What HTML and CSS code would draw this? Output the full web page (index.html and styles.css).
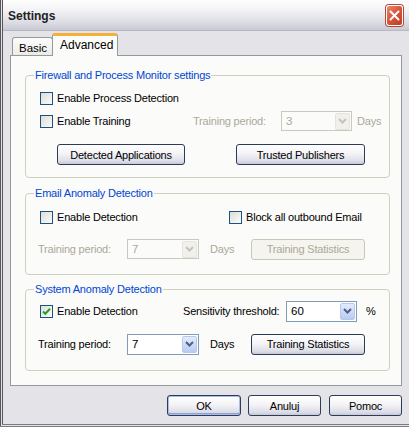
FILE: index.html
```html
<!DOCTYPE html>
<html lang="en">
<head>
  <meta charset="UTF-8">
  <title>Settings</title>
  <link rel="stylesheet" href="styles.css">
</head>
<body>
  <div class="window">
    <div class="titlebar">
      <span class="title">Settings</span>
      <button class="close" aria-label="Close">
        <svg width="11" height="11" viewBox="0 0 11 11"><path d="M1.5 1.5l8 8M9.5 1.5l-8 8" stroke="#fff" stroke-width="2" stroke-linecap="round"/></svg>
      </button>
    </div>

    <div class="main">
      <div class="tabs">
        <div class="tab">Basic</div>
        <div class="tab active">Advanced</div>
      </div>

      <div class="panel">
        <!-- Firewall -->
        <div class="group g1">
          <div class="group-title">Firewall and Process Monitor settings</div>
          <div class="row r-tall">
            <label class="check"><span class="box"></span>Enable Process Detection</label>
          </div>
          <div class="row">
            <label class="check slot-153"><span class="box"></span>Enable Training</label>
            <span class="lbl disabled w-88">Training period:</span>
            <div class="combo disabled w-71"><span>3</span><span class="drop"><svg width="9" height="6" viewBox="0 0 9 6"><path d="M1 1l3.5 3.5L8 1" fill="none" stroke="#c4c3bc" stroke-width="2"/></svg></span></div>
            <span class="lbl disabled unit">Days</span>
          </div>
          <div class="row btn-row">
            <button class="btn w-128">Detected Applications</button>
            <button class="btn w-129">Trusted Publishers</button>
          </div>
        </div>

        <!-- Email -->
        <div class="group g2">
          <div class="group-title">Email Anomaly Detection</div>
          <div class="row">
            <label class="check slot-189"><span class="box"></span>Enable Detection</label>
            <label class="check"><span class="box"></span>Block all outbound Email</label>
          </div>
          <div class="row second">
            <span class="lbl disabled period">Training period:</span>
            <div class="combo disabled w-72"><span>7</span><span class="drop"><svg width="9" height="6" viewBox="0 0 9 6"><path d="M1 1l3.5 3.5L8 1" fill="none" stroke="#c4c3bc" stroke-width="2"/></svg></span></div>
            <span class="lbl disabled days">Days</span>
            <button class="btn disabled w-114" disabled>Training Statistics</button>
          </div>
        </div>

        <!-- System -->
        <div class="group g3">
          <div class="group-title">System Anomaly Detection</div>
          <div class="row">
            <label class="check slot-143"><span class="box checked"><svg width="9" height="9" viewBox="0 0 9 9"><path d="M1 4.5l2.3 2.3L8 1.8" fill="none" stroke="#21a121" stroke-width="2"/></svg></span>Enable Detection</label>
            <span class="lbl w-103">Sensitivity threshold:</span>
            <div class="combo w-71"><span>60</span><span class="drop"><svg width="9" height="6" viewBox="0 0 9 6"><path d="M1 1l3.5 3.5L8 1" fill="none" stroke="#4d6185" stroke-width="2"/></svg></span></div>
            <span class="lbl pct">%</span>
          </div>
          <div class="row third">
            <span class="lbl period">Training period:</span>
            <div class="combo w-72"><span>7</span><span class="drop"><svg width="9" height="6" viewBox="0 0 9 6"><path d="M1 1l3.5 3.5L8 1" fill="none" stroke="#4d6185" stroke-width="2"/></svg></span></div>
            <span class="lbl days">Days</span>
            <button class="btn w-114">Training Statistics</button>
          </div>
        </div>
      </div>

      <div class="actions">
        <button class="btn ok">OK</button>
        <button class="btn w-73">Anuluj</button>
        <button class="btn w-73">Pomoc</button>
      </div>
    </div>
  </div>
</body>
</html>
```

FILE: styles.css
```css
* {
  box-sizing: border-box;
}

body {
  margin: 0;
  background: #fff;
  font-family: 'Liberation Sans', Arial, sans-serif;
  font-size: 11px;
  letter-spacing: -0.2px;
  color: #000;
}

.window {
  width: 409px;
  height: 427px;
  background: #e4e3e8;
  border-left: 3px double #55555a;
  border-bottom: 3px double #7a7a80;
  display: flex;
  flex-direction: column;
}

.titlebar {
  height: 31px;
  display: flex;
  align-items: center;
  justify-content: space-between;
  padding: 0 6px 0 5px;
  background: linear-gradient(#fefefe 0%, #f2f2f5 35%, #dcdce4 75%, #c9c9d5 100%);
  border-bottom: 1px solid #b9b9c6;
}

.title {
  font-weight: bold;
  font-size: 12px;
  letter-spacing: 0;
  color: #222;
  margin-top: 1px;
}

.close {
  width: 17px;
  height: 21px;
  padding: 0;
  border: 1px solid #fff;
  border-radius: 3px;
  background: linear-gradient(135deg, #e88a74 0%, #d9583b 45%, #c23a22 100%);
  box-shadow: 0 0 0 1px #b04a3a;
  display: flex;
  align-items: center;
  justify-content: center;
}

.main {
  flex: 1;
  padding: 2px 7px 0 7px;
  display: flex;
  flex-direction: column;
}

/* tabs */
.tabs {
  display: flex;
  align-items: flex-end;
  height: 22px;
  padding-left: 2px;
}

.tab {
  width: 41px;
  height: 18px;
  border: 1px solid #919b9c;
  border-bottom: none;
  border-radius: 3px 3px 0 0;
  background: linear-gradient(#fdfdfd, #ecebe6);
  padding: 4px 0 0 6px;
  font-size: 11.5px;
  letter-spacing: 0;
}

.tab.active {
  width: 66px;
  height: 23px;
  margin-left: -1px;
  margin-bottom: -1px;
  position: relative;
  z-index: 1;
  background: #fbfbf9;
  border-top: 3px solid #f3b13b;
  padding: 2px 0 0 7px;
  font-size: 12px;
}

.panel {
  height: 331px;
  border: 1px solid #919b9c;
  background: #fbfbf9;
  padding: 0 11px 0 14px;
}

/* groups */
.group {
  position: relative;
  border: 1px solid #d0d0bf;
  border-radius: 4px;
  padding-left: 14px;
}

.group-title {
  position: absolute;
  top: -7px;
  left: 8px;
  padding: 0 1px;
  line-height: 13px;
  background: #fbfbf9;
  color: #0046d5;
}

.g1 {
  margin-top: 19px;
  padding-top: 10px;
  padding-bottom: 12px;
}

.g2 {
  margin-top: 15px;
  padding-top: 12px;
  padding-bottom: 14px;
}

.g3 {
  margin-top: 14px;
  padding-top: 10px;
  padding-bottom: 15px;
}

.row {
  display: flex;
  align-items: center;
  height: 22px;
}

.r-tall {
  height: 24px;
}

.row.second {
  margin-top: 10px;
}

.row.third {
  margin-top: 11px;
}

.btn-row {
  margin-top: 12px;
  height: 21px;
  padding-left: 17px;
  gap: 51px;
}

/* checkbox */
.check {
  display: flex;
  align-items: center;
  gap: 4px;
  white-space: nowrap;
}

.box {
  width: 13px;
  height: 13px;
  flex: none;
  border: 1px solid #1c5180;
  background: linear-gradient(135deg, #dcdcd7, #fbfbf9);
  display: flex;
  align-items: center;
  justify-content: center;
}

.box.checked {
  background: linear-gradient(135deg, #dfe1dc, #fbfbf9);
}

.slot-153 { width: 153px; }
.slot-189 { width: 189px; }
.slot-143 { width: 143px; }

.lbl {
  white-space: nowrap;
}

.disabled {
  color: #aca899;
}

.w-88 { width: 88px; }
.w-103 { width: 103px; }
.period { width: 89px; margin-left: -2px; }
.unit { margin-left: 5px; }
.days { width: 41px; margin-left: 11px; }
.pct { margin-left: 9px; }

/* combo box */
.combo {
  height: 21px;
  border: 1px solid #7f9db9;
  background: #fff;
  display: flex;
  align-items: center;
  justify-content: space-between;
  padding: 1px 1px 1px 4px;
  font-size: 11.5px;
  letter-spacing: 0;
}

.combo.disabled {
  border-color: #cbc9bd;
  background: #fbfbf9;
  height: 20px;
}

.drop {
  width: 15px;
  height: 17px;
  border: 1px solid #b8c8ea;
  border-radius: 2px;
  background: linear-gradient(#e4ebfc, #b9cbf3);
  display: flex;
  align-items: center;
  justify-content: center;
}

.combo.disabled .drop {
  border-color: #e6e5dd;
  background: #f1f0ea;
}

.w-71 { width: 71px; }
.w-72 { width: 72px; }

/* buttons */
.btn {
  height: 21px;
  padding: 0;
  font-family: inherit;
  font-size: 11px;
  letter-spacing: -0.2px;
  color: #000;
  border: 1px solid #2e3a5a;
  border-radius: 3px;
  background: linear-gradient(#ffffff 0%, #f4f4f7 45%, #dcdde6 85%, #c7c9d6 100%);
}

.btn.disabled {
  color: #aca899;
  border-color: #c9c7ba;
  background: #f5f4ee;
}

.w-128 { width: 128px; }
.w-129 { width: 129px; }
.w-114 { width: 114px; }
.w-73 { width: 73px; }

.actions {
  display: flex;
  justify-content: flex-end;
  gap: 8px;
  margin-top: 9px;
}

.btn.ok {
  width: 74px;
  border-color: #2e3a5a;
  box-shadow: inset 0 0 0 1px #a9bde8, inset 0 -1px 0 1px #8aa2d6;
  margin-right: -1px;
}
```
